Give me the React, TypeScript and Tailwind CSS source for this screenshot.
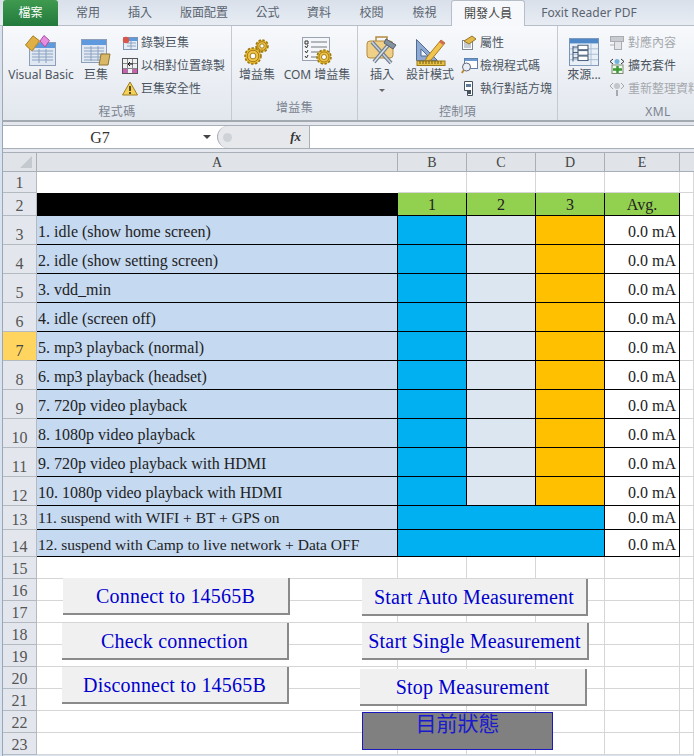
import React from "react";

const CJK = "font-['Noto_Sans','Noto_Sans_CJK_TC',sans-serif]";
const SERIF = "font-['Liberation_Serif','Noto_Sans_CJK_TC',serif]";

const Vb = () => (
  <svg width="32" height="31" viewBox="0 0 32 31">
    <rect x="4.5" y="7.5" width="26" height="23" fill="#dfe7f2" stroke="#8d9fb8" />
    <rect x="5" y="8" width="25" height="5" fill="#5f9ade" />
    <path d="M7 16h21M7 19h21M7 22h21M7 25h21M14 14v14M21 14v14" stroke="#8ba2c0" />
    <path d="M0.5 10 8 .8l6.500 5L7 16z" fill="#e0b044" stroke="#a5802a" />
    <path d="M0.500 10 7 16 14.500 5.800" fill="none" stroke="#c0922f" />
    <path d="M15 6l4-5.500 5.500 5-4.500 6.500z" fill="#e78de0" stroke="#a94ea5" />
  </svg>
);
const Macro = () => (
  <svg width="30" height="27" viewBox="0 0 30 27">
    <rect x="0.5" y="0.5" width="25" height="23" fill="#e3e9f3" stroke="#8d9fb8" />
    <rect x="1" y="1" width="24" height="5" fill="#5f9ade" />
    <path d="M3 9h20M3 12h20M3 15h20M3 18h20M3 21h20M10 7v15M17 7v15" stroke="#8ba2c0" />
    <path d="M20 15h9l-2 11h-9l1-5z" fill="#d9b968" stroke="#8f7434" />
  </svg>
);
const Rec = () => (
  <svg width="16" height="14" viewBox="0 0 16 14">
    <rect x="1.500" y="1.500" width="14" height="12" fill="#e7edf5" stroke="#7d93b2" />
    <rect x="2" y="2" width="13" height="3" fill="#5f9ade" />
    <path d="M5 7h9M5 10h9M9 5v8" stroke="#8ba2c0" />
    <circle cx="4" cy="4" r="3.200" fill="#d8574a" />
  </svg>
);
const Rel = () => (
  <svg width="16" height="16" viewBox="0 0 16 16">
    <rect x="0.500" y="0.500" width="15" height="15" fill="#eef0f3" stroke="#555" />
    <path d="M5.500 1v14M10.500 1v14M1 5.500h14M1 10.500h14" stroke="#888" />
    <rect x="1" y="11" width="4" height="4" fill="#d25bb5" />
    <rect x="11" y="11" width="4" height="4" fill="#d25bb5" />
    <path d="M11 6H6l2-2M6 6l2 2" stroke="#111" fill="none" />
  </svg>
);
const Warn = () => (
  <svg width="16" height="15" viewBox="0 0 16 15">
    <path d="M8 1 15.500 14H.5z" fill="#f6cf55" stroke="#9b7e25" />
    <path d="M8 5v5M8 11v2" stroke="#222" strokeWidth="1.500" />
  </svg>
);
const Gear = ({ x, y, r }: { x: number; y: number; r: number }) => (
  <g>
    <circle cx={x} cy={y} r={r} fill="#eab92c" stroke="#9b7716" strokeWidth="1.600" strokeDasharray="2.400 1.600" />
    <circle cx={x} cy={y} r={r * 0.72} fill="#efc448" stroke="#a37e1c" />
    <circle cx={x} cy={y} r={r * 0.36} fill="#fff" stroke="#a37e1c" />
  </g>
);
const Gears = () => (
  <svg width="26" height="28" viewBox="0 0 26 28">
    <Gear x={18} y={8} r={6} />
    <Gear x={9} y={18} r={8} />
  </svg>
);
const ComAddin = () => (
  <svg width="32" height="30" viewBox="0 0 32 30">
    <rect x="1.500" y="1.500" width="27" height="23" fill="#f4f6f9" stroke="#9aa3af" />
    <path d="M10 6h16M10 11h16M10 16h9M10 21h7" stroke="#70787f" />
    <path d="M4 5h3v3H4zM4 10l1.500 2L7 9M4 15l1.500 2L7 14M4 20l1.500 2L7 19" fill="none" stroke="#333" />
    <Gear x={23} y={21} r={7} />
  </svg>
);
const Tools = () => (
  <svg width="32" height="31" viewBox="0 0 32 31">
    <path d="M10 6V2h11v4" fill="none" stroke="#b38a3f" strokeWidth="1.500" />
    <rect x="1" y="6" width="26" height="17" rx="3" fill="#f0cf87" stroke="#b38a3f" />
    <path d="M6 7 25 28" stroke="#6f7d8c" strokeWidth="4" />
    <path d="M6 7 25 28" stroke="#c7d1dc" strokeWidth="1.600" />
    <path d="M24 8 8 27" stroke="#6f7d8c" strokeWidth="4" />
    <path d="M24 8 8 27" stroke="#d8e0e8" strokeWidth="1.600" />
    <path d="M20 4l10 6-3 4-9-6z" fill="#8391a0" stroke="#56616d" />
  </svg>
);
const Design = () => (
  <svg width="31" height="28" viewBox="0 0 31 28">
    <path d="M1.500 1.500v21h21z" fill="#8ea9d2" stroke="#4f6b96" />
    <path d="M6 11v7h7z" fill="#eef3fa" stroke="#4f6b96" />
    <path d="M12 19 26 2l4 3-14 17-6 1z" fill="#f0c44f" stroke="#a67c1e" />
    <path d="M26 2l4 3-2 2-4-3z" fill="#d46a5a" />
    <rect x="2" y="23" width="28" height="4.500" fill="#e8c244" stroke="#9a7a1e" />
    <path d="M5 23v3M8 23v3M11 23v3M14 23v3M17 23v3M20 23v3M23 23v3M26 23v3" stroke="#6f5a18" />
  </svg>
);
const Props = () => (
  <svg width="16" height="15" viewBox="0 0 16 15">
    <rect x="1.500" y="5.500" width="10" height="9" fill="#fff" stroke="#7a8794" />
    <path d="M3 8h7M3 10h7M3 12h7" stroke="#8a97a6" />
    <path d="M3 6 11 1l4 3-7 5z" fill="#e3b94c" stroke="#96762a" />
  </svg>
);
const ViewCode = () => (
  <svg width="17" height="16" viewBox="0 0 17 16">
    <rect x="3.500" y="0.500" width="13" height="10" fill="#fff" stroke="#5d7fa8" />
    <rect x="4" y="1" width="12" height="2" fill="#6c9ad0" />
    <circle cx="5.500" cy="9" r="4" fill="#e8eef5" stroke="#667" />
    <path d="M3 12 .8 15" stroke="#b98b35" strokeWidth="2" />
  </svg>
);
const Dialog = () => (
  <svg width="14" height="15" viewBox="0 0 12 15">
    <path d="M2.500.5h8v14h-5v-5h-3z" fill="#fff" stroke="#46525e" />
    <path d="M4 3h5v3H4z" fill="#5f7b9c" />
    <rect x="5" y="9" width="4" height="4" fill="#46525e" />
  </svg>
);
const Source = () => (
  <svg width="30" height="28" viewBox="0 0 30 31" preserveAspectRatio="none">
    <rect x="0.500" y="0.500" width="29" height="30" fill="#e9eff7" stroke="#7a94b6" />
    <rect x="1" y="1" width="28" height="5" fill="#4f88c9" />
    <path d="M22 6v24M1 12h28M1 18h28M1 24h28" stroke="#a9bcd4" />
    <path d="M4 9v17M4 10h5M4 16h5M4 22h5" stroke="#39506d" fill="none" />
    <rect x="9" y="8" width="10" height="5" fill="#fff" stroke="#39506d" />
    <rect x="9" y="14" width="10" height="5" fill="#fff" stroke="#39506d" />
    <rect x="9" y="20" width="10" height="5" fill="#fff" stroke="#39506d" />
  </svg>
);
const MapGrey = () => (
  <svg width="16" height="15" viewBox="0 0 16 15">
    <rect x="1.500" y="1.500" width="13" height="5" fill="#c8ccd1" stroke="#a9adb3" />
    <rect x="5.500" y="6.500" width="7" height="8" fill="#e2e4e7" stroke="#a9adb3" />
    <path d="M1 10h4" stroke="#a9adb3" />
  </svg>
);
const Pack = () => (
  <svg width="16" height="16" viewBox="0 0 16 16">
    <path d="M4 1 1 3.500 4 6M12 1l3 2.500L12 6" fill="none" stroke="#333" />
    <circle cx="8" cy="3.500" r="2.500" fill="#6fb3d9" />
    <rect x="3" y="7" width="11" height="8.500" fill="#f1f6ee" stroke="#7c8a74" />
    <path d="M8.500 8v7M4 11.500h9" stroke="#3d9a35" strokeWidth="2.500" />
  </svg>
);
const Refresh = () => (
  <svg width="16" height="16" viewBox="0 0 16 16">
    <path d="M4 2 1 5l3 3M12 2l3 3-3 3" fill="none" stroke="#a6aaae" />
    <circle cx="8" cy="5" r="3" fill="#c3c6ca" />
    <path d="M8 9v6" stroke="#a6aaae" strokeWidth="2" />
  </svg>
);

const tabs: [string, string][] = [
  ["常用", "w-[52px]"],
  ["插入", "w-[52px]"],
  ["版面配置", "w-[76px]"],
  ["公式", "w-[51px]"],
  ["資料", "w-[52px]"],
  ["校閱", "w-[53px]"],
  ["檢視", "w-[53px]"],
];

const BigBtn = ({ icon, label, w, arrow }: { icon: React.ReactNode; label: string; w: string; arrow?: boolean }) => (
  <div className={`${w} shrink-0 flex flex-col items-center`}>
    <div className="h-[35px] flex items-end justify-center">{icon}</div>
    <div className="text-[12px] leading-[18px] text-[#4c5561] whitespace-nowrap">{label}</div>
    {arrow && <div className="mt-[5px] w-0 h-0 border-l-[3px] border-r-[3px] border-t-[3px] border-l-transparent border-r-transparent border-t-[#666]" />}
  </div>
);

const SmallBtn = ({ icon, label, muted }: { icon: React.ReactNode; label: string; muted?: boolean }) => (
  <div className={`h-[23px] flex items-center text-[12px] whitespace-nowrap ${muted ? "text-[#a4a8ad]" : "text-[#4c5561]"}`}>
    <span className="w-[19px] flex justify-start shrink-0">{icon}</span>
    <span>{label}</span>
  </div>
);

const Group = ({ w, label, children, last }: { w: string; label: string; children: React.ReactNode; last?: boolean }) => (
  <div className={`${w} shrink-0 h-full flex flex-col ${last ? "" : "border-r border-[#c5cad1]"}`}>
    <div className="flex-1 flex pt-[5px]">{children}</div>
    <div className="h-[24px] text-center text-[12px] leading-[24px] tracking-[0.4px] text-[#7a838f]">{label}</div>
  </div>
);

const rows = [
  "1. idle (show home screen)",
  "2. idle (show setting screen)",
  "3. vdd_min",
  "4. idle (screen off)",
  "5. mp3 playback (normal)",
  "6. mp3 playback (headset)",
  "7. 720p video playback",
  "8. 1080p video playback",
  "9. 720p video playback with HDMI",
  "10. 1080p video playback with HDMI",
  "11. suspend with WIFI + BT + GPS on",
  "12. suspend with Camp to live network + Data OFF",
];

const RowHead = ({ n, active }: { n: number; active?: boolean }) => (
  <div
    className={`flex items-end justify-center text-[16px] leading-[18px] border-b border-r border-[#b4bac2] ${
      active ? "bg-[#ffd560] text-[#444]" : "bg-[#e3e7ed] text-[#555]"
    }`}
  >
    {n}
  </div>
);
const Blank = () => <div className="border-b border-r border-[#d6d6d6] bg-white" />;
const ColHead = ({ t }: { t: string }) => (
  <div className="flex items-center justify-center bg-[#e0e3e8] border-r border-b border-[#a9afb7] text-[14px] text-[#444]">{t}</div>
);
const Head = ({ t }: { t: string }) => (
  <div className="flex items-end justify-center bg-[#92d050] border-r border-b border-black text-[16px] leading-[20px] text-[#222]">{t}</div>
);
const Ma = ({ small }: { small: boolean }) => (
  <div className={`flex items-end justify-end pr-[3px] bg-white border-r border-b border-black text-[16px] leading-[22px] text-[#222] ${small ? "" : "pb-[1px]"}`}>0.0 mA</div>
);

const Btn = ({ t, c }: { t: string; c: string }) => (
  <div
    className={`absolute ${c} h-[37px] flex items-center justify-center bg-[#f0f0f0] border-r-2 border-b-2 border-[#8a8a8a] text-[20px] leading-none tracking-[0.2px] text-[#0000cc] whitespace-nowrap`}
  >
    {t}
  </div>
);

export default function App() {
  return (
    <div className={`w-[694px] h-[756px] overflow-hidden bg-[#d8e3ef] ${CJK}`}>
      {/* tabs */}
      <div className="h-[26px] flex pl-[3px] text-[12px] text-[#5a6470] bg-gradient-to-b from-[#d9e0ea] to-[#e8edf4] border-b border-[#b8bec7]">
        <div className="w-[55px] mr-[4px] h-[26px] flex items-center justify-center rounded-t-[3px] bg-gradient-to-b from-[#3f9a4f] to-[#217a3c] text-white">檔案</div>
        {tabs.map(([t, w]) => (
          <div key={t} className={`${w} flex items-center justify-center`}>{t}</div>
        ))}
        <div className="w-[74px] h-[26px] flex items-center justify-center bg-[#f6f8fb] border border-b-0 border-[#b8bec7] rounded-t-[3px] text-[#444]">開發人員</div>
        <div className="w-[128px] flex items-center justify-center">Foxit Reader PDF</div>
      </div>

      {/* ribbon */}
      <div className="h-[96px] ml-[2px] flex overflow-hidden bg-gradient-to-b from-[#f7f9fc] to-[#e2e7ee] border-l border-b-2 border-[#a3a9b1]">
        <Group w="w-[229px]" label="程式碼">
          <div className="w-[4px] shrink-0" />
          <BigBtn w="w-[68px]" label="Visual Basic" icon={<Vb />} />
          <BigBtn w="w-[42px]" label="巨集" icon={<Macro />} />
          <div className="ml-[5px] flex flex-col shrink-0">
            <SmallBtn icon={<Rec />} label="錄製巨集" />
            <SmallBtn icon={<Rel />} label="以相對位置錄製" />
            <SmallBtn icon={<Warn />} label="巨集安全性" />
          </div>
        </Group>
        <Group w="w-[126px]" label="增益集">
          <BigBtn w="w-[50px]" label="增益集" icon={<Gears />} />
          <BigBtn w="w-[70px]" label="COM 增益集" icon={<ComAddin />} />
        </Group>
        <Group w="w-[200px]" label="控制項">
          <div className="w-[4px] shrink-0" />
          <BigBtn w="w-[40px]" label="插入" icon={<Tools />} arrow />
          <BigBtn w="w-[56px]" label="設計模式" icon={<Design />} />
          <div className="ml-[3px] flex flex-col shrink-0">
            <SmallBtn icon={<Props />} label="屬性" />
            <SmallBtn icon={<ViewCode />} label="檢視程式碼" />
            <SmallBtn icon={<Dialog />} label="執行對話方塊" />
          </div>
        </Group>
        <Group w="w-[200px]" label="XML" last>
          <div className="w-[8px] shrink-0" />
          <BigBtn w="w-[36px]" label="來源..." icon={<Source />} />
          <div className="ml-[7px] flex flex-col shrink-0">
            <SmallBtn muted icon={<MapGrey />} label="對應內容" />
            <SmallBtn icon={<Pack />} label="擴充套件" />
            <SmallBtn muted icon={<Refresh />} label="重新整理資料" />
          </div>
        </Group>
      </div>

      {/* formula bar */}
      <div className="h-[30px] ml-[2px] pt-[3px] bg-[#e4e8ee] border-l border-[#9aa7b6]">
        <div className="h-[24px] flex items-center bg-white border-y border-[#a9afb7]">
          <div className={`w-[194px] mr-[6px] pt-[2px] text-center text-[16px] text-[#333] ${SERIF}`}>G7</div>
          <div className="w-0 h-0 border-l-[4px] border-r-[4px] border-t-[4px] border-l-transparent border-r-transparent border-t-[#444]" />
          <div className="ml-[6px] w-[92px] h-full flex items-center justify-between bg-[#e6e8ec] rounded-l-[12px] border-l border-[#a9afb7] pl-[5px] pr-[8px]">
            <span className="w-[9px] h-[9px] rounded-full bg-[#cfd3d8]" />
            <span className={`text-[13px] italic font-bold text-[#333] ${SERIF}`}>fx</span>
          </div>
          <div className="w-px h-full bg-[#a9afb7]" />
          <div className="flex-1" />
        </div>
      </div>

      {/* sheet */}
      <div className={`relative ml-[2px] border-l border-[#9aa7b6] ${SERIF}`}>
        <div className="grid grid-cols-[34px_361px_69px_69px_69px_75px_14px] grid-rows-[19px_21px_23px_repeat(10,29px)_24px_27px_repeat(9,22px)] h-[604px] border-t border-[#a9afb7]">
          <div className="relative bg-[#e0e3e8] border-r border-b border-[#a9afb7]">
            <div className="absolute right-[4px] bottom-[3px] w-0 h-0 border-l-[12px] border-b-[12px] border-l-transparent border-b-[#c4c9d0]" />
          </div>
          {["A", "B", "C", "D", "E"].map((c) => <ColHead key={c} t={c} />)}
          <div className="bg-[#e0e3e8] border-b border-[#a9afb7]" />

          <RowHead n={1} />
          <div className="bg-white border-b border-white" />
          {[0, 1, 2, 3, 4].map((i) => <Blank key={i} />)}

          <RowHead n={2} />
          <div className="bg-black" />
          <Head t="1" />
          <Head t="2" />
          <Head t="3" />
          <Head t="Avg." />
          <Blank />

          {rows.map((r, i) => {
            const n = i + 3;
            return (
              <React.Fragment key={r}>
                <RowHead n={n} active={n === 7} />
                <div className={`flex items-end pl-[1px] bg-[#c5d9f1] border-r border-b border-black leading-[22px] text-[#222] whitespace-nowrap overflow-hidden ${i < 10 ? "text-[16px] pb-[1px]" : "text-[15.5px]"}`}>
                  {r}
                </div>
                {i < 10 ? (
                  <>
                    <div className="bg-[#00b0f0] border-r border-b border-black" />
                    <div className="bg-[#dce6f1] border-r border-b border-black" />
                    <div className="bg-[#ffc000] border-r border-b border-black" />
                  </>
                ) : (
                  <div className="col-span-3 bg-[#00b0f0] border-r border-b border-black" />
                )}
                <Ma small={i >= 10} />
                <Blank />
              </React.Fragment>
            );
          })}

          {[15, 16, 17, 18, 19, 20, 21, 22, 23].map((n) => (
            <React.Fragment key={n}>
              <RowHead n={n} />
              {[0, 1, 2, 3, 4, 5].map((i) => <Blank key={i} />)}
            </React.Fragment>
          ))}
        </div>

        <Btn t="Connect to 14565B" c="left-[60px] top-[426px] w-[227px]" />
        <Btn t="Check connection" c="left-[59px] top-[471px] w-[227px]" />
        <Btn t="Disconnect to 14565B" c="left-[59px] top-[515px] w-[227px]" />
        <Btn t="Start Auto Measurement" c="left-[359px] top-[427px] w-[226px]" />
        <Btn t="Start Single Measurement" c="left-[359px] top-[471px] w-[227px]" />
        <Btn t="Stop Measurement" c="left-[357px] top-[517px] w-[227px]" />
        <div className="absolute left-[359px] top-[560px] w-[191px] h-[38px] bg-[#808080] border border-[#1a1ac0] text-center text-[21px] leading-[22px] text-[#1a1acc]">
          目前狀態
        </div>
      </div>
    </div>
  );
}
